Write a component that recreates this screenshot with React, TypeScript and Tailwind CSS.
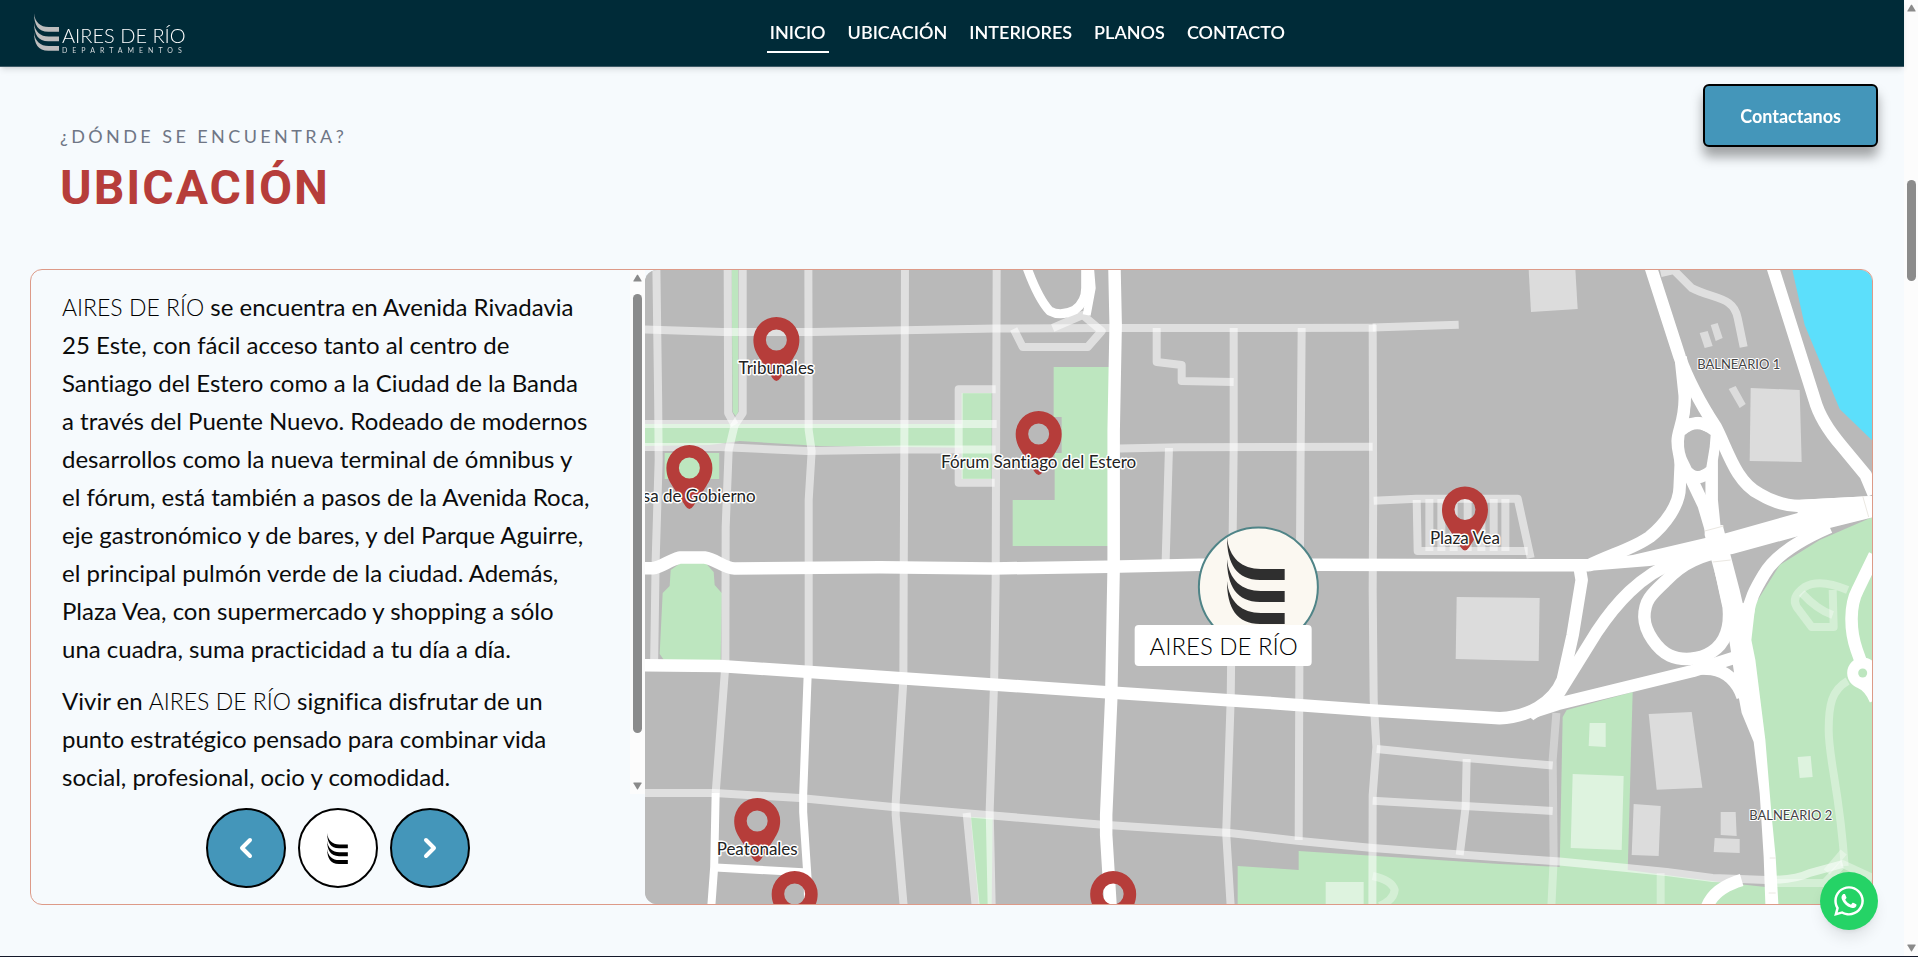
import { ChevronLeft, ChevronRight } from "lucide-react";
import { FaWhatsapp } from "react-icons/fa";

const NAV = ["INICIO", "UBICACIÓN", "INTERIORES", "PLANOS", "CONTACTO"];

function BrandMark({ className }: { className: string }) {
  return (
    <svg viewBox="0 0 58 87" className={className} fill="currentColor" aria-hidden="true">
      {[0, 22, 44].map((dy) => (
        <path key={dy} transform={`translate(0 ${dy})`} d="M0 0C2 21 15 32 34 32H58V43H33C10 43 0 27 0 0Z" />
      ))}
    </svg>
  );
}

function BrandName() {
  return <span className="text-[23px] font-light text-black">AIRES DE RÍO</span>;
}

function Header() {
  return (
    <header className="relative z-10 flex h-[67px] shrink-0 items-center border-b border-[#3d5a66] bg-[#002b38] text-white shadow-md">
      <a href="#inicio" className="flex items-start gap-[3px] pl-[34px]">
        <BrandMark className="h-[38px] w-[25px] text-[#bdbdbd]" />
        <span className="flex flex-col pt-3">
          <span className="text-xl leading-5 font-light">AIRES DE RÍO</span>
          <span className="pt-px text-[7px] leading-2 tracking-[5px] text-[#d5dadd]">DEPARTAMENTOS</span>
        </span>
      </a>
      <nav className="flex flex-1 justify-center gap-4 pr-9">
        {NAV.map((item, i) => (
          <a
            key={item}
            href={`#${item.toLowerCase()}`}
            className={`border-b-2 px-[3px] pt-[6px] pb-[7px] text-lg leading-6 font-semibold ${i === 0 ? "border-white" : "border-transparent"}`}
          >
            {item}
          </a>
        ))}
      </nav>
    </header>
  );
}

const GREEN = "#bde6bf";

const PARKS = [
  "732,270 738.5,270 738.5,412 736,416 733,412",
  "645,424 987,424 987,448 820,446 740,441 710,445 645,446",
  "962,393 992,393 992,479 962,479",
  "665,453 719.5,453 719.5,479 665,479",
  "1054,367 1110,367 1110,546 1013,546 1013,500 1055,500 1055,453 1062,453 1062,417 1054,417",
  "681,563 705,562 714,572 715,585 722,593 721,661 665,661 660,654 663,593 670,586 671,570",
  "971,817 993,818 992,904 979,904",
  "1567,710 1633,692 1628,871 1560,868 1563,717",
  "1238,866 1299,870 1299,851 1500,864 1560,867 1628,870 1720,882 1775,888 1775,904 1238,904",
  "1873,517 1820,540 1780,565 1755,605 1751,640 1755,660 1765,745 1772,904 1873,904",
];

const BUILDINGS = [
  "1529,270 1575.7,270 1578,309 1531.3,312",
  "1700,333 1708,331 1713,346 1705,348",
  "1711,325 1718,323 1723,338 1716,341",
  "1729,389 1736,386 1746,404 1740,408",
  "1751,388 1800,390 1802,462 1750,461",
  "1457,597 1540,598 1539,661 1456,659",
  "1649,714 1692,712 1702.7,787.7 1657,789.7",
  "1634,804 1661,806 1659,856 1632,855",
  "1721,812 1736,812 1737,836 1721,835",
  "1715,838 1740,839 1740,853 1714,852",
  "1798,757 1811,756 1813,777 1800,778",
  "1590,723 1606,723 1606,747 1589,746",
  "1573,774 1624,776 1622,850 1571,848",
  "1326,882 1364,882 1364,904 1326,904",
];

const STREETS = [
  "M656.7 268L658.5 400L659 460L656 560L654.5 660",
  "M728 268L728.5 413L735 425",
  "M743 268V413L735 425L729 450L726 527L725.7 665L716 793",
  "M808.7 268L809 430L812 451L809 500V670",
  "M905.3 268L905 370L904 580L903.7 680L896 803V815L904 906",
  "M997 268L996 580L994.5 680L990 810L992 906",
  "M967 813L976 906",
  "M643 329.5L723 332H813L995 328.5L1100 328L1376 327.8",
  "M1373 327.5L1459 324.7",
  "M643 424H997",
  "M643 447H720L807 451L900 449.5H996",
  "M996 389.3H959V482.7H995",
  "M643 793H715L800 798L893 807L987 815L1100 824.5L1230 833L1300 841L1373 848L1467 855L1560 861.5L1627 868L1667 872L1713 878L1767 880Q1795 880 1810 873L1843 864",
  "M1157 328V362L1182 365V381L1234 382",
  "M1234 328V447L1233 534L1231 700L1226.5 833L1231 906",
  "M1302 328L1301 447L1300 600L1299 840",
  "M1373 325L1373.5 500L1373 590L1374 700L1376.7 747L1373 795L1372.7 906",
  "M1120 448.5L1180 447.3L1373 446.7",
  "M1169.3 448L1166 560",
  "M1374 500.7L1417 498.7H1518L1531 558",
  "M1417 500L1418 551H1528",
  "M1377 749L1467 758L1553 765.5",
  "M1373 800.7L1553 811",
  "M1467 759L1466 807L1460 855",
  "M1661 273L1674 270L1692 288C1705 295 1722 297 1729 303Q1736 308 1738 318L1744 347",
];

const PARK_PATHS = [
  "M1556.7 713L1553 760L1554 860L1551.7 906",
  "M1661 873V906",
  "M1848 681C1832 690 1829 705 1829 730C1829 760 1840 790 1845 866",
  "M1848 590Q1820 578 1805 587Q1791 597 1797 607L1812 627H1834L1833 590",
  "M1802 593Q1818 610 1833 615",
  "M1373 876Q1392 880 1395 890Q1394 900 1380 906",
  "M1827 872L1844 852",
  "M1767 883H1825L1843 864L1873 878",
];

const AVENUES = [
  "M640 568.3H653C662 567 668 561 680 557.5H705C716 559 724 568 735 568.5L880 567.3L993 568.5L1109 566.7L1200 564.7H1320L1550 565.3H1590",
  "M1114.7 264L1116 325L1114 430V567L1111.5 700L1106.5 815V835L1111 908",
  "M640 665.3L720 666L807 671.7L1107 692.3L1267 702.7L1377 710.7L1500 718.3C1528 717 1553 704 1563 680L1573 635L1582 580L1580 568",
  "M1728 550C1700 556 1684 562 1667 580C1652 594 1644.7 600 1644.7 617C1645 632 1658 650 1670 655.5C1682 661 1700 660 1712 652C1726 643 1731 628 1729 607L1721 570",
  "M1530 715L1556 698L1597 632C1615 605 1640 575 1678 561L1720 550",
  "M1830 527C1800 540 1775 555 1764 575C1755 590 1750 600 1748 614",
  "M1530 713L1558 704L1693 671L1740 656",
  "M1693 668L1712 669C1727 671 1738 682 1743 697",
  "M1650 264L1680 357C1690 385 1705 410 1716 427C1728 450 1736 482 1760 494C1775 503 1788 506 1800 506L1876 502",
  "M1681 357L1685 395C1686 420 1678 430 1678 441C1678 452 1681 455 1681 465L1680 487C1680 505 1665 525 1650 537C1635 548 1610 555 1588 566",
  "M1716 432L1712 460V500L1715 530",
  "M1684 463L1704 505L1712 532",
  "M1772 264L1815 400C1820 418 1830 432 1842 446L1866 475L1874 494",
  "M1875 555L1858 590C1850 605 1850 630 1857 650L1862 664",
  "M1860 682Q1870 686 1876 700",
  "M1707 908C1712 893 1725 885 1742 880",
];

const INTERCHANGE = [
  "1588,560 1633,555 1727,533 1798,513 1797,500 1874,496 1874,517 1810,533 1733,554 1650,566 1588,571",
  "1705,526.7 1723,525 1740,590 1743,603 1755.7,605 1751.7,640 1755.7,660 1765.7,740 1771.7,813 1776,857 1778.7,904 1765.7,904 1764,857 1760,793 1754,742 1742,713 1739,697 1735,677 1730,643 1725,615 1717,580 1705,535",
];

const PINS = [
  { x: 776.7, y: 340, label: "Tribunales" },
  { x: 689.7, y: 468, label: "Casa de Gobierno" },
  { x: 1039, y: 434, label: "Fórum Santiago del Estero" },
  { x: 1465.3, y: 509.5, label: "Plaza Vea" },
  { x: 757.5, y: 821, label: "Peatonales" },
  { x: 795, y: 894, label: "" },
  { x: 1113.5, y: 894, label: "" },
];

function CityMap() {
  return (
    <div className="relative min-h-0 overflow-hidden rounded-xl bg-[#b9b9b9]">
      <svg viewBox="645 270 1228 634" preserveAspectRatio="xMidYMid slice" className="block size-full" role="img" aria-label="Mapa de la zona">
        <rect x="645" y="270" width="1228" height="634" fill="#b9b9b9" />
        <path d="M1792.7 270L1805 325L1840 409L1873 441V270Z" fill="#5cdffb" />
        {PARKS.map((p) => <polygon key={p} points={p} fill={GREEN} />)}
        {BUILDINGS.map((p) => <polygon key={p} points={p} fill="#fff" fillOpacity="0.5" />)}
        <g fill="none" stroke="#fff" strokeLinejoin="round">
          {STREETS.map((d) => <path key={d} d={d} strokeWidth="8" strokeOpacity="0.55" />)}
          {PARK_PATHS.map((d) => <path key={d} d={d} strokeWidth="8" strokeOpacity="0.35" />)}
          {[1429.7, 1441.7, 1454, 1468, 1481.7, 1494, 1505.7].map((x) => (
            <path key={x} d={`M${x} 499V551`} strokeWidth="8" strokeOpacity="0.5" />
          ))}
          <path d="M1053 328L1083 315L1102 331L1088 347H1023L1014 329" strokeWidth="8" strokeOpacity="0.55" />
          <path d="M1026 264Q1038 298 1050 311Q1061 317 1075 310Q1086 302 1086 288V264" strokeWidth="9" />
          <path d="M1090 264L1092 288L1087 315" strokeWidth="8" />
          <path d="M716 793L714.5 867L711.5 908" strokeWidth="8" />
          <path d="M808 675L803.5 795V812L808 880L808.5 908" strokeWidth="8" />
          <path d="M716 867.5L808 872.5" strokeWidth="8" />
        </g>
        {INTERCHANGE.map((p) => <polygon key={p} points={p} fill="#fff" />)}
        <g fill="none" stroke="#fff" strokeWidth="12.5" strokeLinejoin="round">
          {AVENUES.map((d) => <path key={d} d={d} />)}
          <path d="M1682 430Q1697 416 1714 430C1716 445 1711 460 1709 472Q1698 482 1688 473Q1678 455 1679 440Z" />
        </g>
        <path d="M1685 435Q1698 425 1711 435L1710 447L1706.7 467Q1698 474 1692 468L1686.7 457Q1683 447 1685 435Z" fill="#b9b9b9" />
        <path d="M1691.5 404L1699 416.5L1690 418Z" fill="#b9b9b9" />
        <circle cx="1863" cy="673" r="15.5" fill="#fff" />
        <circle cx="1863" cy="673" r="4.5" fill={GREEN} />
        <path stroke="#ebe8e2" d="M1705 531L1724 526M1713 562L1731 560M1863 496L1869 517M1770 858H1776M1769 893H1776" />
        {PINS.map((p) => (
          <path
            key={p.x}
            transform={`translate(${p.x} ${p.y})`}
            fill="#b63d3a"
            fillRule="evenodd"
            d="M-23 0A23 23 0 0 1 23 0C23 8 20 13 17 18L4 38Q0 44-4 38L-17 18C-20 13-23 8-23 0ZM-10.500 0A10.500 10.500 0 1 0 10.500 0A10.500 10.500 0 1 0-10.500 0Z"
          />
        ))}
        <g textAnchor="middle" stroke="#fff" strokeWidth="3" strokeLinejoin="round" paintOrder="stroke">
          {PINS.filter((p) => p.label).map((p) => (
            <text key={p.label} x={p.x} y={p.y + 34} fontSize="17" fill="#222">{p.label}</text>
          ))}
          <text x="1739" y="369" fontSize="13" fill="#444" strokeWidth="2">BALNEARIO 1</text>
          <text x="1791" y="820" fontSize="13" fill="#444" strokeWidth="2">BALNEARIO 2</text>
        </g>
        <circle cx="1258.700" cy="587" r="59.500" fill="#fbf8f1" stroke="#4f8487" strokeWidth="2" />
        <g transform="translate(1227.300 537)" fill="#2f2f2f">
          {[0, 22, 44].map((dy) => (
            <path key={dy} transform={`translate(0 ${dy})`} d="M0 0C2 21 15 32 34 32H57.700V43H33C10 43 0 27 0 0Z" />
          ))}
        </g>
        <rect x="1135" y="625" width="177" height="41" rx="4" fill="#fff" />
        <text x="1224" y="655" textAnchor="middle" fontSize="24" fontWeight="300" fill="#000">AIRES DE RÍO</text>
      </svg>
    </div>
  );
}

function Arrow({ down }: { down?: boolean }) {
  return (
    <svg viewBox="0 0 10 8" className="h-2 w-[9px]" fill="#8a8a8a" aria-hidden="true">
      <path d={down ? "M1 0H9Q10 0 9.500 1L5.500 7.500Q5 8 4.500 7.500L.500 1Q0 0 1 0Z" : "M1 8H9Q10 8 9.500 7L5.500.500Q5 0 4.500.500L.500 7Q0 8 1 8Z"} />
    </svg>
  );
}

function Description() {
  return (
    <div className="flex min-w-0 flex-col pb-4">
      <div className="flex h-[524px] overflow-hidden rounded-tl-xl">
        <div className="min-w-0 flex-1 pt-[18px] pr-9 pl-[31px] text-2xl leading-[38px] text-[#0b0b0b]">
          <p className="mb-[14px]">
            <BrandName /> se encuentra en Avenida Rivadavia 25 Este, con fácil acceso tanto al centro de Santiago del
            Estero como a la Ciudad de la Banda a través del Puente Nuevo. Rodeado de modernos desarrollos como la nueva
            terminal de ómnibus y el fórum, está también a pasos de la Avenida Roca, eje gastronómico y de bares, y del
            Parque Aguirre, el principal pulmón verde de la ciudad. Además, Plaza Vea, con supermercado y shopping a
            sólo una cuadra, suma practicidad a tu día a día.
          </p>
          <p>
            Vivir en <BrandName /> significa disfrutar de un punto estratégico pensado para combinar vida social,
            profesional, ocio y comodidad.
          </p>
        </div>
        <div className="flex w-[15px] flex-col items-center bg-[#fcfcfc] py-1" aria-hidden="true">
          <Arrow />
          <div className="mt-3 h-[439px] w-[9px] rounded-full bg-[#8b8b8b]" />
          <div className="mt-auto"><Arrow down /></div>
        </div>
      </div>
      <div className="mt-[14px] flex justify-center gap-3">
        <button type="button" aria-label="Anterior" className="flex size-20 items-center justify-center rounded-full border-2 border-black bg-[#4496ba] text-white">
          <ChevronLeft className="size-8" strokeWidth={3} />
        </button>
        <button type="button" aria-label="Aires de Río" className="flex size-20 items-center justify-center rounded-full border-2 border-black bg-white text-black">
          <BrandMark className="h-[31px] w-[21px]" />
        </button>
        <button type="button" aria-label="Siguiente" className="flex size-20 items-center justify-center rounded-full border-2 border-black bg-[#4496ba] text-white">
          <ChevronRight className="size-8" strokeWidth={3} />
        </button>
      </div>
    </div>
  );
}

export default function App() {
  return (
    <div className="flex h-screen overflow-hidden border-b border-[#14192a] bg-[#f6fafd] font-[Lato,'Noto_Sans',sans-serif] [font-variant-ligatures:none]">
      <div className="flex min-w-0 flex-1 flex-col">
        <Header />
        <main className="pr-[31px] pl-[30px]">
          <section id="ubicacion">
            <div className="pt-[55px] pl-[30px]">
              <p className="text-lg leading-7 tracking-[0.19em] text-[#6f7685]">¿DÓNDE SE ENCUENTRA?</p>
              <h2 className="mt-[14px] font-[Roboto,sans-serif] text-5xl leading-12 font-bold tracking-[2px] text-[#b63d3a]">UBICACIÓN</h2>
            </div>
            <div className="mt-[57px] grid grid-cols-[1fr_2fr] rounded-xl border border-[#dd9a88]">
              <Description />
              <CityMap />
            </div>
          </section>
        </main>
      </div>
      <div className="flex w-[14px] shrink-0 flex-col items-center bg-[#fcfcfc] py-1" aria-hidden="true">
        <Arrow />
        <div className="mt-[168px] h-[101px] w-[9px] rounded-full bg-[#8b8b8b]" />
        <div className="mt-auto"><Arrow down /></div>
      </div>
      <a href="#contacto" className="fixed top-[84px] right-10 rounded-md border-2 border-black bg-[#4496ba] px-[35px] pt-[17px] pb-[15px] text-lg leading-[27px] font-bold text-white shadow-[0_10px_12px_rgba(0,0,0,0.35)]">
        Contactanos
      </a>
      <a href="#whatsapp" aria-label="WhatsApp" className="fixed right-10 bottom-[27px] flex size-[58px] items-center justify-center rounded-full bg-[#25d366] text-white shadow-lg">
        <FaWhatsapp className="size-[34px]" />
      </a>
    </div>
  );
}
